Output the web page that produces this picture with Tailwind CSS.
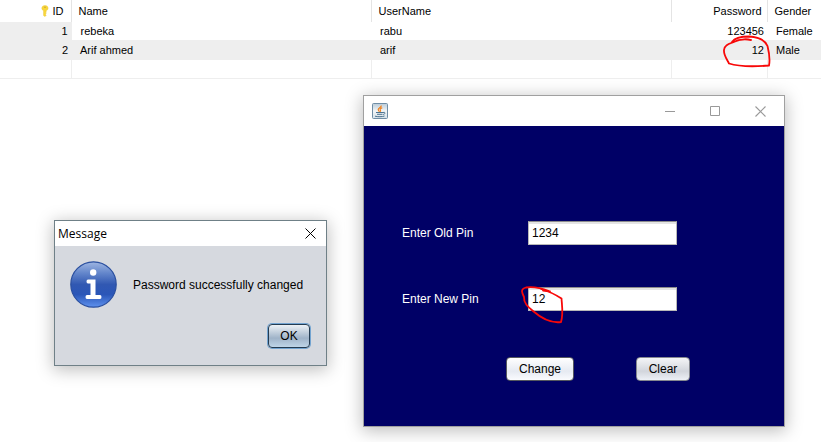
<!DOCTYPE html>
<html lang="en">
<head>
<meta charset="utf-8">
<title>Change pin</title>
<script src="https://cdn.jsdelivr.net/npm/@tailwindcss/browser@4"></script>
</head>
<body class="relative min-h-screen overflow-hidden bg-white font-['Liberation_Sans',Arial,sans-serif] text-[12px] text-black">

<table class="w-full table-fixed border-collapse text-[11px] leading-4">
  <colgroup>
    <col class="w-[71px]"><col class="w-[300px]"><col class="w-[300px]"><col class="w-[96px]"><col>
  </colgroup>
  <thead>
    <tr class="h-[22px] text-left *:border-r *:border-[#e4e4e4] *:p-0 *:font-normal">
      <th>
        <div class="flex items-center justify-end gap-1 pr-[7px]">
          <svg class="h-3 w-2" viewBox="0 0 8 12" aria-hidden="true">
            <path d="M4 .5C2 .5.8 1.700.8 3.200c0 1.200.7 2 1.700 2.400V10.500L4 11.600l1.200-1.200-.7-.8.700-.8-.6-.8.6-.7V5.600c1.200-.4 1.900-1.200 1.900-2.400C7.100 1.700 6 .5 4 .5z" fill="#f8d63a" stroke="#ecc63a" stroke-width=".4"/>
            <circle cx="4" cy="2.300" r=".7" fill="#b8963a"/>
          </svg>
          <span>ID</span>
        </div>
      </th>
      <th><div class="pl-[7px]">Name</div></th>
      <th><div class="pl-[7px]">UserName</div></th>
      <th><div class="pr-[5px] text-right">Password</div></th>
      <th class="border-r-0!"><div class="pl-[7px]">Gender</div></th>
    </tr>
  </thead>
  <tbody>
    <tr class="h-[18px] *:p-0">
      <td class="border-r border-[#eeeeee] bg-[#eeeeee]"><div class="pr-[3px] text-right">1</div></td>
      <td><div class="pl-[9px]">rebeka</div></td>
      <td><div class="pl-[9px]">rabu</div></td>
      <td><div class="pr-[3px] text-right">123456</div></td>
      <td><div class="pl-[9px]">Female</div></td>
    </tr>
    <tr class="h-5 bg-[#eeeeee] *:p-0">
      <td><div class="pr-[3px] text-right">2</div></td>
      <td><div class="pl-[9px]">Arif ahmed</div></td>
      <td><div class="pl-[9px]">arif</div></td>
      <td><div class="pr-[3px] text-right">12</div></td>
      <td><div class="pl-[9px]">Male</div></td>
    </tr>
    <tr class="h-[18px] border-b border-[#eeeeee] *:border-r *:border-[#eeeeee] *:p-0">
      <td></td><td></td><td></td><td></td><td class="border-r-0!"></td>
    </tr>
  </tbody>
</table>

<!-- Message dialog -->
<section role="dialog" aria-labelledby="msg-title" class="absolute top-[220px] left-[54px] w-[273px] border border-[#6f8087] bg-[#d6d9df] shadow-[0_3px_16px_1px_rgba(0,0,0,0.26)]">
  <header class="flex h-[25px] items-center justify-between bg-white pr-2.5 pl-[3px]">
    <h1 id="msg-title" class="font-['Open_Sans','Noto_Sans',sans-serif] text-[12px]">Message</h1>
    <button type="button" aria-label="Close" class="size-[11px]">
      <svg class="block size-[11px]" viewBox="0 0 11 11" aria-hidden="true"><path d="M.5.5l10 10M10.500.5l-10 10" stroke="#000" stroke-width="1"/></svg>
    </button>
  </header>
  <div class="flex items-center gap-4 pt-[15px] pl-[15px]">
    <svg class="size-[47px]" viewBox="0 0 47 47" aria-hidden="true">
      <defs>
        <linearGradient id="ball" x1="0" y1="0" x2="0" y2="1">
          <stop offset="0" stop-color="#9fb6e2"/><stop offset=".25" stop-color="#6386cb"/><stop offset=".5" stop-color="#3158b2"/><stop offset=".72" stop-color="#2a56b8"/><stop offset="1" stop-color="#5f92ee"/>
        </linearGradient>
      </defs>
      <circle cx="23.500" cy="23.500" r="22.700" fill="url(#ball)" stroke="#2a4f9f" stroke-width="1.200"/>
      <circle cx="23.200" cy="11.500" r="3.200" fill="#fff"/>
      <path d="M18 18.500h7.500v15.500h4.500q1.500 0 1.500 2t-1.500 2H17q-1.500 0-1.500-2t1.500-2h3.500V22.500H18q-1.500 0-1.500-2t1.500-2z" fill="#fff"/>
    </svg>
    <p>Password successfully changed</p>
  </div>
  <div class="flex justify-end pt-4 pr-4 pb-[17px]">
    <button type="button" class="h-6 w-[42px] rounded-[4px] border border-[#243c52] bg-linear-to-b from-[#eef2f6] via-[#9fb3c8] via-60% to-[#bfd5e8] ring-1 ring-[#73a4d1]">OK</button>
  </div>
</section>

<!-- Change pin window -->
<section aria-label="Change pin" class="absolute top-[95px] left-[363px] w-[422px] border border-[#a0a0a0] bg-[#000066] shadow-[0_3px_16px_1px_rgba(0,0,0,0.26)]">
  <header class="flex h-[30px] items-center justify-between bg-white pr-[18px] pl-2">
    <svg class="size-4" viewBox="0 0 16 16" aria-hidden="true">
      <defs><linearGradient id="tile" x1="0" y1="0" x2="0" y2="1"><stop offset="0" stop-color="#b9cbd8"/><stop offset=".5" stop-color="#f2f5f7"/><stop offset="1" stop-color="#d5e0e8"/></linearGradient></defs>
      <rect x=".5" y=".5" width="15" height="15" rx="1" fill="url(#tile)" stroke="#6f8da5"/>
      <path d="M9.300 2.500C9.500 4.500 6 5 6.200 6.800c.1.900.9 1.300 1.300 2M10.300 4.800C8.500 5.500 7.700 6.300 8.300 7.200c.5.700.3 1.200-.2 1.600" fill="none" stroke="#f0801c" stroke-width="1.200"/>
      <path d="M4 9.500h7M5 11.300h5.500M3 13.200c2.500.7 7.500.7 9.500-.2M11 9.500c2.500-.8 2.800 1.300.2 2" fill="none" stroke="#4d7490"/>
    </svg>
    <div class="flex items-center gap-[34px]">
      <button type="button" aria-label="Minimize" class="size-[11px]"><svg class="block size-[11px]" viewBox="0 0 11 11" aria-hidden="true"><path d="M0 5.500h10" stroke="#999"/></svg></button>
      <button type="button" aria-label="Maximize" class="size-[11px]"><svg class="block size-[11px]" viewBox="0 0 11 11" aria-hidden="true"><path d="M.5.5h9v9h-9z" fill="none" stroke="#999"/></svg></button>
      <button type="button" aria-label="Close" class="size-[11px]"><svg class="block size-[11px]" viewBox="0 0 11 11" aria-hidden="true"><path d="M.5.5l10 10M10.500.5l-10 10" stroke="#999" stroke-width="1.100"/></svg></button>
    </div>
  </header>
  <form class="pt-[95px] pb-[45px] pl-[38px]">
    <div class="grid grid-cols-[126px_149px] items-center gap-y-[42px]">
      <label for="old-pin" class="text-white">Enter Old Pin</label>
      <input id="old-pin" type="text" value="1234" class="h-6 w-full border border-t-[#8c8c8c] border-r-[#b8b8b8] border-b-[#b8b8b8] border-l-[#b8b8b8] bg-white px-[3px] shadow-[inset_0_2px_0_#e4e4e4] outline-none">
      <label for="new-pin" class="text-white">Enter New Pin</label>
      <input id="new-pin" type="text" value="12" class="h-6 w-full border border-t-[#8c8c8c] border-r-[#b8b8b8] border-b-[#b8b8b8] border-l-[#b8b8b8] bg-white px-[3px] shadow-[inset_0_2px_0_#e4e4e4] outline-none">
    </div>
    <div class="flex gap-[62px] pt-[46px] pl-[104px]">
      <button type="button" class="h-6 w-[68px] rounded-[4px] border border-[#55585e] bg-linear-to-b from-white via-[#e6eaf2] via-60% to-[#fafbfe]">Change</button>
      <button type="button" class="h-6 w-[54px] rounded-[4px] border border-[#85888f] bg-linear-to-b from-[#f4f5f7] via-[#d2d5dc] via-60% to-[#edf0f6]">Clear</button>
    </div>
  </form>
</section>

<!-- Red pen marks -->
<svg class="pointer-events-none absolute top-[34px] left-[720px] h-[36px] w-[54px]" viewBox="720 34 54 36" fill="none" stroke="#f80808" stroke-width="1.800" stroke-linecap="round" aria-hidden="true">
  <path d="M751 40C744 38.500 737 40 732.500 42.500M732 42C735 37.500 741 36.500 749 36.500C757 37 765 40 767.500 46C769 52 770.500 58 769 65.500C757 66.500 740 67 729 63.500C727 59.500 723.500 55 724 50C724.500 44 731 43.500 735 41.500C741 39 747 38.500 751 40"/>
</svg>
<svg class="pointer-events-none absolute top-[284px] left-[518px] h-[42px] w-[48px]" viewBox="518 284 48 42" fill="none" stroke="#f80808" stroke-width="1.800" stroke-linecap="round" aria-hidden="true">
  <path d="M549 291C541 288 533 286.500 526 287.500C520 289 522 293 524 297C523.500 303 528 307 533 311C541 318 550 323.500 561 322C563.500 314 562 306 561.500 298.500C556 295 548 291 541 289M543 290.500L550 291.500"/>
</svg>
</body>
</html>
